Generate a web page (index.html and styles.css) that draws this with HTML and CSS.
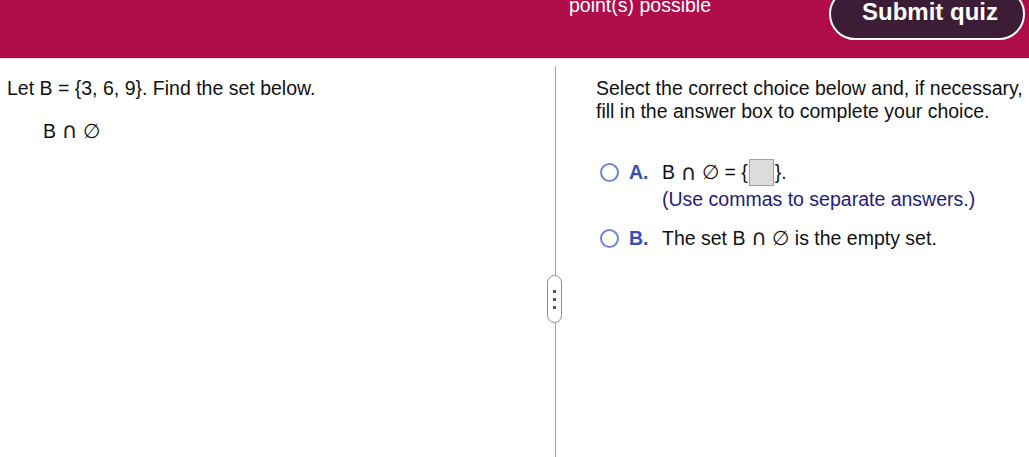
FILE: index.html
```html
<!DOCTYPE html>
<html lang="en">

<head>
    <meta charset="UTF-8">
    <meta name="viewport" content="width=device-width, initial-scale=1.0">
    <title>Quiz</title>
    <link rel="stylesheet" href="styles.css">
</head>

<body>
    <div class="top-bar">
        <div class="points">point(s) possible</div>
        <button class="submit">Submit quiz</button>
    </div>
    <div class="main">
        <div class="left">
            <p class="question">Let B = {3, 6, 9}. Find the set below.</p>
            <p class="expr">B <span class="sym">∩</span> ∅</p>
        </div>
        <div class="divider">
            <div class="handle">
                <span></span>
                <span></span>
                <span></span>
            </div>
        </div>
        <div class="right">
            <p class="intro">Select the correct choice below and, if necessary,<br>fill in the answer box to complete your choice.</p>
            <div class="choice choice-a">
                <span class="radio"></span>
                <span class="letter">A.</span>
                <div class="choice-body">
                    <div class="answer-line">B&nbsp;<span class="sym">∩</span>&nbsp;∅ = {<span class="answer-box"></span>}.</div>
                    <div class="hint">(Use commas to separate answers.)</div>
                </div>
            </div>
            <div class="choice choice-b">
                <span class="radio"></span>
                <span class="letter">B.</span>
                <div class="choice-body">The set B <span class="sym">∩</span> ∅ is the empty set.</div>
            </div>
        </div>
    </div>
</body>

</html>
```

FILE: styles.css
```css
html,
body {
    padding: 0;
    margin: 0;
    overflow: hidden;
}

body {
    width: 1029px;
    height: 457px;
    font-family: "Liberation Sans", Arial, sans-serif;
    color: #111;
    background: #fff;
}

.top-bar {
    height: 58px;
    background-color: #b00c4a;
    display: flex;
    align-items: flex-start;
    justify-content: space-between;
    padding-left: 569px;
    padding-right: 4px;
    border-bottom: 1px solid #f3dfe7;
    overflow: hidden;
}

.points {
    color: #fff;
    font-size: 19.5px;
    line-height: 20px;
    margin-top: -5px;
}

.submit {
    margin-top: -12px;
    width: 196px;
    height: 52px;
    padding: 0 0 4px 6px;
    border: 2px solid #fff;
    border-radius: 26px;
    background-color: #3d1d36;
    color: #fff;
    font-family: "Liberation Sans", Arial, sans-serif;
    font-weight: bold;
    font-size: 24px;
    line-height: 26px;
}

.main {
    display: flex;
    margin-top: 7px;
    height: 392px;
}

.left {
    width: 548px;
    padding-left: 7px;
    padding-top: 11px;
}

p {
    margin: 0;
}

.question,
.intro,
.expr,
.choice {
    font-size: 19.5px;
    line-height: 23px;
}

.sym {
    font-family: "DejaVu Sans", sans-serif;
    font-size: 22px;
    line-height: 20px;
    color: #222;
}

.expr {
    margin-top: 20px;
    padding-left: 36px;
}

.divider {
    position: relative;
    width: 1px;
    background-color: #a8a8a8;
}

.handle {
    position: absolute;
    left: -8px;
    top: 209px;
    width: 13px;
    height: 46px;
    border: 1px solid #8c8c8c;
    border-radius: 8px;
    background: #fff;
    display: flex;
    flex-direction: column;
    align-items: center;
    justify-content: center;
    gap: 5px;
}

.handle span {
    width: 3px;
    height: 3px;
    background-color: #6b4a52;
}

.right {
    padding-left: 40px;
    padding-top: 11px;
}

.choice {
    display: flex;
    align-items: flex-start;
}

.choice-a {
    margin-top: 38px;
}

.choice-b {
    margin-top: 16px;
}

.radio {
    width: 15px;
    height: 15px;
    border: 2px solid #6f86d6;
    border-radius: 50%;
    margin: 2px 0 0 4px;
    flex-shrink: 0;
}

.letter {
    width: 33px;
    padding-left: 10px;
    color: #3a4db3;
    font-weight: bold;
}

.answer-line {
    display: flex;
    align-items: center;
    height: 23px;
}

.answer-box {
    display: inline-block;
    width: 23px;
    height: 25px;
    border: 1px solid #8aa3cf;
    background-color: #dcdcdc;
    margin: 0 1px;
}

.hint {
    color: #1c1c80;
    margin-top: 4px;
}
```
